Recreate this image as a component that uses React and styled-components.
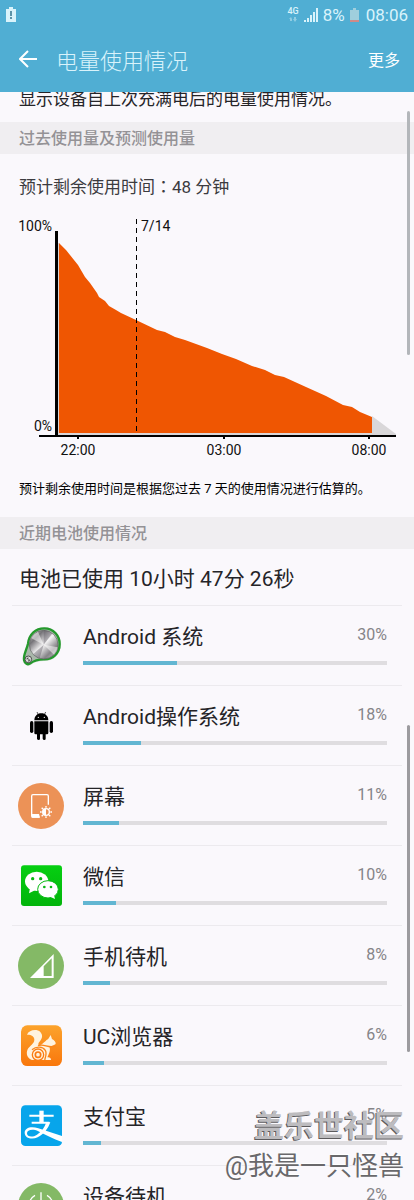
import React from 'react'
import styled, { createGlobalStyle } from "styled-components";

const apps = [
    { name: "Android 系统", percent: 30, fill: 31, Icon: SystemIcon },
    { name: "Android操作系统", percent: 18, fill: 19, Icon: AndroidIcon },
    { name: "屏幕", percent: 11, fill: 12, Icon: ScreenIcon },
    { name: "微信", percent: 10, fill: 11, Icon: WechatIcon },
    { name: "手机待机", percent: 8, fill: 9, Icon: CellIcon },
    { name: "UC浏览器", percent: 6, fill: 7, Icon: UcIcon },
    { name: "支付宝", percent: 5, fill: 6, Icon: AlipayIcon },
    { name: "设备待机", percent: 2, fill: 3, Icon: PowerIcon },
];

const level = [
    [59, 243], [66, 250], [70, 255], [78, 265], [85, 277], [90, 283], [97, 293], [99, 297],
    [105, 301], [109, 306], [116, 310], [121, 313], [136, 320], [157, 330], [165, 332],
    [175, 337], [185, 340], [207, 348], [222, 354], [236, 359], [252, 366], [265, 370],
    [275, 375], [284, 377], [306, 387], [326, 396], [343, 405], [352, 407], [360, 412], [372, 417],
];

const hours = [
    { x: 78, label: "22:00" },
    { x: 224, label: "03:00" },
    { x: 369, label: "08:00" },
];

export default function App() {
    return (
        <>
            <GlobalStyle />
            <Screen>
                <Header>
                    <StatusBar>
                        <svg width="10" height="15" viewBox="0 0 10 15">
                            <path d="M3 0h4v2h3v13H0V2h3z" fill="#d9f3fb" />
                            <path d="M4 4h2v5H4zM4 10h2v2H4z" fill="#5d93a8" />
                        </svg>
                        <StatusGroup>
                            <Network>
                                <span>4G</span>
                                <svg width="8" height="5" viewBox="0 0 8 5" fill="#8fcde3">
                                    <path d="M0 2l2-2 1 2v2H1V2zM5 0h2v2h1L6 5 4 2h1z" />
                                </svg>
                            </Network>
                            <svg width="14" height="14" viewBox="0 0 14 14" fill="#d9f3fb">
                                <path d="M0 12h2v2H0zM3 10h2v4H3zM6 7h2v7H6zM9 4h2v10H9zM12 0h2v14h-2z" />
                            </svg>
                            <span>8%</span>
                            <svg width="9" height="14" viewBox="0 0 9 14">
                                <path d="M3 0h3v2h3v12H0V2h3z" fill="#9fcfdd" />
                                <path d="M0 12h9v2H0z" fill="#d08a88" />
                            </svg>
                            <Clock>08:06</Clock>
                        </StatusGroup>
                    </StatusBar>
                    <Toolbar>
                        <BackButton type="button" aria-label="返回">
                            <svg width="18" height="18" viewBox="0 0 18 18" fill="none" stroke="#fff" strokeWidth="2">
                                <path d="M18 9H2M9 1L1 9l8 8" />
                            </svg>
                        </BackButton>
                        <Title>电量使用情况</Title>
                        <MoreButton type="button">更多</MoreButton>
                    </Toolbar>
                </Header>
                <main>
                    <Intro>显示设备自上次充满电后的电量使用情况。</Intro>
                    <SectionTitle>过去使用量及预测使用量</SectionTitle>
                    <Estimate>预计剩余使用时间<Colon>：</Colon>48 分钟</Estimate>
                    <BatteryChart />
                    <Note>预计剩余使用时间是根据您过去 7 天的使用情况进行估算的。</Note>
                    <SectionTitle>近期电池使用情况</SectionTitle>
                    <Total>电池已使用 10小时 47分 26秒</Total>
                    <List>
                        {apps.map(({ name, percent, fill, Icon }) => (
                            <Row key={name}>
                                <Icon />
                                <Details>
                                    <RowText>
                                        <Name>{name}</Name>
                                        <Percent>{percent}%</Percent>
                                    </RowText>
                                    <Track>
                                        <Fill style={{ width: `${fill}%` }} />
                                    </Track>
                                </Details>
                            </Row>
                        ))}
                    </List>
                </main>
                <ScrollThumb $top={111} $height={244} $color="#b3b6ba" />
                <ScrollThumb $top={725} $height={327} $color="#9c9b9f" />
                <Watermark>
                    <Community>盖乐世社区</Community>
                    <Author>@我是一只怪兽</Author>
                </Watermark>
            </Screen>
        </>
    )
}

function BatteryChart() {
    const line = level.map((p) => p.join(" ")).join("L");
    return (
        <Chart viewBox="0 215 414 246" role="img" aria-label="电量">
            <path d="M58 243h1v190h313v-17l24 18v1H58z" fill="#d9d7d9" />
            <path d={`M59 433L${line}V433Z`} fill="#ef5602" />
            <path d="M55 231h3v204h338v2H39v-2h16z" fill="#000" />
            <path d="M136.5 219V434" stroke="#000" strokeDasharray="5 4" />
            <text x="52" y="231" textAnchor="end">100%</text>
            <text x="52" y="431" textAnchor="end">0%</text>
            <text x="141" y="231">7/14</text>
            {hours.map(({ x, label }) => (
                <g key={label}>
                    <rect x={x - 1} y="437" width="2" height="2" />
                    <text x={x} y="455" textAnchor="middle">{label}</text>
                </g>
            ))}
        </Chart>
    )
}

function SystemIcon() {
    return (
        <IconSvg viewBox="0 0 138 138">
            <defs>
                <linearGradient id="metal" x1="0" y1="0" x2="1" y2="1">
                    <stop offset="0" stopColor="#c9c9c9" />
                    <stop offset=".25" stopColor="#77757a" />
                    <stop offset=".5" stopColor="#f4f3f4" />
                    <stop offset=".75" stopColor="#858387" />
                    <stop offset="1" stopColor="#d6d5d6" />
                </linearGradient>
            </defs>
            <path d="M16 112C12 97 23 81 27 62C31 31 51 13 80 13C108 13 129 36 129 63C129 94 106 115 78 114C61 114 50 117 38 126C29 132 18 124 16 112Z" fill="#d5e5d5" />
            <path d="M18 111C15 98 26 80 30 62C33 34 52 16 79 16C106 16 125 38 125 63C125 91 104 110 77 109C60 109 49 112 37 121C29 127 20 122 18 111Z" fill="#a9b7aa" stroke="#25992d" strokeWidth="7" />
            <circle cx="77" cy="65" r="43" fill="url(#metal)" stroke="#5f6361" strokeWidth="2" />
            <path d="M77 65L39 45A43 43 0 0 1 60 26ZM77 65L119 73A43 43 0 0 1 108 95Z" fill="#fff" opacity=".5" />
            <path d="M77 65L77 22A43 43 0 0 1 103 31ZM77 65L65 106A43 43 0 0 1 45 94Z" fill="#555159" opacity=".4" />
            <circle cx="31" cy="109" r="10" fill="#ddd" stroke="#4a4d4b" strokeWidth="3" />
            <path d="M24 109l7-7v7l7 1-7 7v-8z" fill="#4a4d4b" />
        </IconSvg>
    )
}

function AndroidIcon() {
    return (
        <IconSvg viewBox="0 0 138 138">
            <path d="M57 27L61 35M83 27L79 35" stroke="#000" strokeWidth="2" />
            <path d="M49 52C49 39 58 31 70 31S91 39 91 52Z" />
            <circle cx="61" cy="43" r="2" fill="#fff" />
            <circle cx="79" cy="43" r="2" fill="#fff" />
            <path d="M49 55H91V90Q91 94 87 94H83V107Q83 111 79 111T74 107V94H66V107Q66 111 62 111T57 107V94H53Q49 94 49 90Z" />
            <rect x="36" y="54" width="10" height="36" rx="5" />
            <rect x="95" y="54" width="10" height="36" rx="5" />
        </IconSvg>
    )
}

function ScreenIcon() {
    return (
        <IconSvg viewBox="0 0 138 138">
            <circle cx="69" cy="69" r="69" fill="#ec9257" />
            <path d="M91 65V39Q91 35 87 35H45Q41 35 41 39V98Q41 102 45 102H64" fill="none" stroke="#fff" strokeWidth="4" />
            <path d="M41 93H63L66 104H41Z" fill="#fff" />
            <circle cx="84" cy="87" r="10" fill="none" stroke="#fff" strokeWidth="4" />
            <path d="M84 77A10 10 0 0 0 84 97Z" fill="#fff" />
            <path d="M84 69V74M84 100V105M66 87H71M97 87H102M71 74L75 78M93 96L97 100M97 74L93 78M75 96L71 100" stroke="#fff" strokeWidth="4" />
        </IconSvg>
    )
}

function WechatIcon() {
    return (
        <IconSvg viewBox="0 0 138 138">
            <defs>
                <linearGradient id="wechat" x1="0" y1="0" x2="0" y2="1">
                    <stop offset="0" stopColor="#06cf12" />
                    <stop offset="1" stopColor="#02b40b" />
                </linearGradient>
            </defs>
            <rect x="9" y="7" width="123" height="122" rx="9" fill="url(#wechat)" />
            <ellipse cx="56" cy="55" rx="35" ry="29" fill="#fff" />
            <path d="M36 74L33 91L51 82Z" fill="#fff" />
            <circle cx="44" cy="47" r="5" fill="#08b912" />
            <circle cx="68" cy="47" r="5" fill="#08b912" />
            <ellipse cx="90" cy="79" rx="31" ry="26" fill="#fff" stroke="#08b912" strokeWidth="3" />
            <path d="M98 102L111 108L108 96Z" fill="#fff" />
            <circle cx="79" cy="72" r="4" fill="#08b912" />
            <circle cx="99" cy="72" r="4" fill="#08b912" />
        </IconSvg>
    )
}

function CellIcon() {
    return (
        <IconSvg viewBox="0 0 138 138">
            <circle cx="69" cy="69" r="69" fill="#84b966" />
            <path d="M36 105L107 33V105ZM77 70V99H101V46Z" fill="#fff" fillRule="evenodd" />
        </IconSvg>
    )
}

function UcIcon() {
    return (
        <IconSvg viewBox="0 0 138 138">
            <defs>
                <linearGradient id="uc" x1="0" y1="0" x2="0" y2="1">
                    <stop offset="0" stopColor="#fca32c" />
                    <stop offset="1" stopColor="#f9770c" />
                </linearGradient>
            </defs>
            <rect x="9" y="7" width="123" height="122" rx="19" fill="url(#uc)" />
            <path d="M27 35C33 20 57 17 67 27C77 38 71 50 63 58C59 64 61 68 67 66C74 64 78 57 83 54C87 50 90 49 92 46L98 36L102 48C109 51 114 57 113 63C107 69 98 68 94 72C99 82 92 94 88 103C95 102 99 105 99 111H42C28 107 23 92 29 79C35 68 49 62 49 50C49 39 38 34 27 35Z" fill="#fff3df" />
            <path d="M42 80C55 69 74 70 82 82C87 90 84 98 80 111" fill="none" stroke="#fa861b" strokeWidth="4" />
            <path d="M60 68C78 60 90 77 113 69" fill="none" stroke="#fa861b" strokeWidth="4" />
            <circle cx="60" cy="95" r="17" fill="#fff3df" stroke="#fa7c12" strokeWidth="4" />
            <circle cx="60" cy="95" r="8" fill="none" stroke="#fa7c12" strokeWidth="5" />
        </IconSvg>
    )
}

function AlipayIcon() {
    return (
        <IconSvg viewBox="0 0 138 138">
            <rect x="9" y="7" width="123" height="122" rx="13" fill="#07a5eb" />
            <path d="M34 38H107M41 59H94" fill="none" stroke="#fff" strokeWidth="6" />
            <path d="M64 23H77V60H64Z" fill="#fff" />
            <path d="M97 57C91 76 77 94 59 103C42 111 20 106 20 89C20 74 40 68 61 76L132 99V117C105 108 83 96 61 85C45 77 27 80 27 91C27 102 44 104 57 95C70 87 80 73 84 60Z" fill="#fff" />
        </IconSvg>
    )
}

function PowerIcon() {
    return (
        <IconSvg viewBox="0 0 138 138">
            <circle cx="69" cy="69" r="69" fill="#84b966" />
            <path d="M69 28V68M51 37A36 36 0 1 0 87 37" fill="none" stroke="#fff" strokeWidth="4" />
        </IconSvg>
    )
}

const GlobalStyle = createGlobalStyle`
    *{
        box-sizing: border-box;
    }
    body{
        margin: 0;
        background-color: #faf8fc;
        color: #252428;
        font-family: Roboto, "Noto Sans CJK SC", sans-serif;
    }
    h1, h2, p, ul{
        margin: 0;
        padding: 0;
        font-weight: 400;
    }
    button{
        border: none;
        padding: 0;
        background: none;
        color: #fff;
        font-family: inherit;
        cursor: pointer;
    }
    svg{
        display: block;
        flex-shrink: 0;
    }
`

const Screen = styled.div`
    position: relative;
    height: 100vh;
    overflow: hidden;
`

const Header = styled.header`
    background-color: #50aed3;
    color: #d9f3fb;
`

const StatusBar = styled.div`
    display: flex;
    align-items: center;
    justify-content: space-between;
    height: 29px;
    padding: 0 6px;
    font-size: 17px;
`

const StatusGroup = styled.div`
    display: flex;
    align-items: center;
    gap: 5px;
`

const Network = styled.div`
    display: flex;
    flex-direction: column;
    align-items: center;
    gap: 2px;
    font-size: 9px;
    font-weight: 500;
    line-height: 8px;
`

const Clock = styled.time`
    margin-left: 2px;
`

const Toolbar = styled.div`
    display: flex;
    align-items: center;
    height: 63px;
    padding: 0 14px 3px 19px;
`

const BackButton = styled.button`
    margin-right: 19px;
`

const Title = styled.h1`
    flex: 1;
    font-size: 22px;
    font-weight: 300;
`

const MoreButton = styled.button`
    font-size: 16px;
`

/* the list is scrolled, so the top of this line runs under the header */
const Intro = styled.p`
    overflow: hidden;
    padding: 0 19px 16px;
    font-size: 17px;
    line-height: 14px;
    white-space: nowrap;
`

const SectionTitle = styled.h2`
    padding: 2px 19px 0;
    background-color: #f0eef1;
    color: #949296;
    font-size: 16px;
    font-weight: 500;
    line-height: 30px;
`

const Estimate = styled.p`
    padding: 5px 19px 0;
    color: #3c3b3f;
    font-size: 17px;
    line-height: 56px;
`

/* the TC face centres the full-width colon */
const Colon = styled.span`
    font-family: "Noto Sans CJK TC", sans-serif;
    line-height: 1;
`

const Chart = styled.svg`
    width: 100%;
    overflow: visible;
    text{
        fill: #111;
        font-size: 14px;
    }
`

const Note = styled.p`
    padding: 0 19px;
    color: #000;
    font-size: 13px;
    line-height: 56px;
`

const Total = styled.p`
    padding: 4px 19px 0;
    font-size: 21px;
    line-height: 52px;
`

const List = styled.ul`
    margin: 0 12px;
    list-style: none;
`

const Row = styled.li`
    display: flex;
    align-items: center;
    gap: 19px;
    height: 80px;
    padding: 0 15px 0 6px;
    border-top: 1px solid #eceaee;
`

const IconSvg = styled.svg`
    width: 46px;
    height: 46px;
`

const Details = styled.div`
    flex: 1;
    padding-bottom: 8px;
`

const RowText = styled.div`
    display: flex;
    align-items: center;
    justify-content: space-between;
    height: 32px;
    margin-bottom: 10px;
`

const Name = styled.span`
    font-size: 21px;
`

const Percent = styled.span`
    color: #858488;
    font-size: 16px;
`

const Track = styled.div`
    height: 4px;
    background-color: #dfdde0;
`

const Fill = styled.div`
    height: 100%;
    background-color: #62b6d2;
`

const ScrollThumb = styled.div`
    position: absolute;
    top: ${({ $top }) => $top}px;
    right: 4px;
    width: 3px;
    height: ${({ $height }) => $height}px;
    border-radius: 2px;
    background-color: ${({ $color }) => $color};
`

const Watermark = styled.div`
    position: absolute;
    right: 10px;
    bottom: 16px;
    text-align: right;
`

const Community = styled.p`
    color: #bdbcbf;
    font-size: 30px;
    font-weight: 700;
    line-height: 44px;
    text-shadow: -1px 1px 0 #5c5b5e;
`

const Author = styled.p`
    color: #69686b;
    font-size: 26px;
    line-height: 36px;
    text-shadow: 1px -1px 0 #fff;
`
